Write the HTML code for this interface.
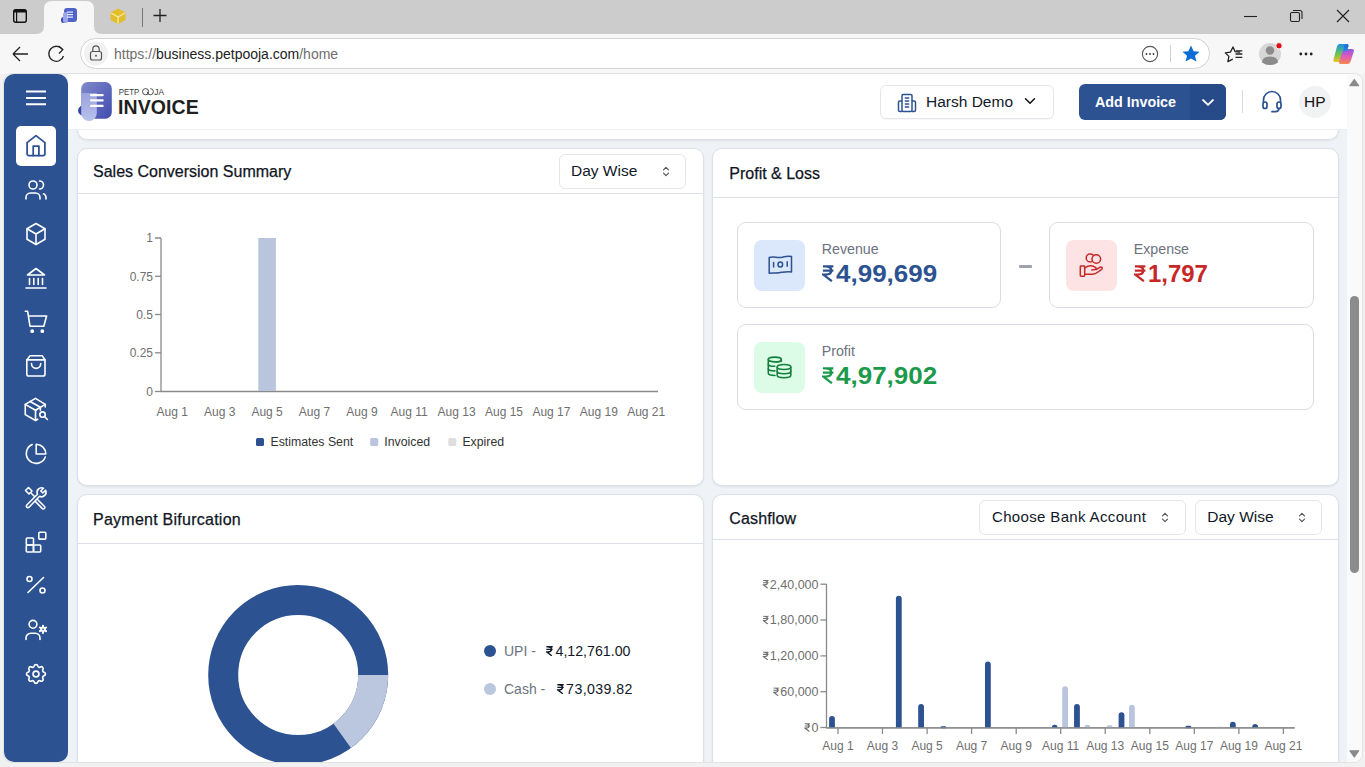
<!DOCTYPE html>
<html><head><meta charset="utf-8">
<style>
*{box-sizing:border-box;margin:0;padding:0}
html,body{width:1365px;height:767px;overflow:hidden;background:#f1f1f1;font-family:"Liberation Sans",sans-serif;color:#111827}
.abs{position:absolute}
#tabs{position:absolute;z-index:1;left:0;top:0;width:1365px;height:33.5px;background:#cccccc}
#addr{position:absolute;left:0;top:33px;width:1365px;height:41px;background:#f7f7f7}
#vp{position:absolute;left:4px;top:74px;width:1358px;height:688px;background:#eff2f6;overflow:hidden;border-radius:8px;box-shadow:0 0 0 1px #e2e2e2}
#side{position:absolute;z-index:6;left:0;top:0;width:64px;height:688px;background:#2c5291;border-radius:10px 10px 10px 10px}
#hdr{position:absolute;z-index:5;left:64px;top:0;width:1280px;height:56px;background:#fff;border-bottom:1px solid #edf0f3}
.card{position:absolute;background:#fff;border:1px solid #dde1e7;border-radius:10px;box-shadow:0 1px 2px rgba(0,0,0,.08)}
.ch{position:absolute;left:0;right:0;top:0;border-bottom:1px solid #dde1e7}
.title{position:absolute;left:16px;font-size:16px;color:#0f1522;white-space:nowrap;-webkit-text-stroke:0.25px #0f1522}
.sel{position:absolute;border:1px solid #e3e6ea;border-radius:6px;background:#fff;font-size:15px;color:#111827;white-space:nowrap}
.sel span{position:absolute;left:12px;top:9px}
.sel svg{position:absolute;top:12px}
.lbl{position:absolute;font-size:12px;color:#6b7280;white-space:nowrap}
.ico{position:absolute;left:22px;width:20px;height:20px}
#scroll{position:absolute;z-index:7;left:1343px;top:0;width:15px;height:688px;background:#fafafa}
.pbox{position:absolute;border:1px solid #d9dde3;border-radius:9px;background:#fff}
.tile{position:absolute;left:15.5px;top:16.5px;width:51.5px;height:51px;border-radius:8px}
.plbl{position:absolute;left:83.5px;top:18px;font-size:14.2px;color:#6b7280;white-space:nowrap}
.pamt{position:absolute;left:98px;top:38px;font-size:23px;font-weight:700;white-space:nowrap;transform-origin:0 0}
svg text{font-family:"Liberation Sans",sans-serif}
.leg{position:absolute;font-size:14px;color:#6b7280;white-space:nowrap}
.legv{position:absolute;font-size:14.2px;color:#111827;white-space:nowrap}
</style></head><body>
<svg width="0" height="0" style="position:absolute"><defs><symbol id="rs" viewBox="0 0 12 17"><path d="M0.8 1.3 H11.3 M0.8 5.6 H11.3 M3.2 1.3 Q9.2 1.3 9.2 5.6 Q9.2 9.7 3.5 9.7 H1.2 L9.8 16.2" fill="none" stroke="currentColor" stroke-width="2.2" stroke-linejoin="miter"/></symbol></defs></svg>

<div id="tabs">
  <svg class="abs" style="left:0;top:0" width="1365" height="34">
    <path d="M36 34 Q44 34 44 26 L44 9 Q44 1 52 1 L86 1 Q94 1 94 9 L94 26 Q94 34 102 34 Z" fill="#f7f7f7"/>
    <rect x="13.7" y="9.7" width="12.6" height="12.6" rx="2" fill="none" stroke="#111" stroke-width="1.4"/>
    <path d="M13.7 11.7 Q13.7 9.7 15.7 9.7 H24.3 Q26.3 9.7 26.3 11.7 V12.6 H13.7Z" fill="#111"/>
    <path d="M16.6 12 V22" stroke="#111" stroke-width="1.2"/>
    <rect x="64" y="8" width="13" height="14" rx="3" fill="#5063c9"/>
    <rect x="61" y="17" width="5" height="6" rx="2.5" fill="#3d4fb0"/>
    <rect x="63" y="12" width="5" height="11" rx="2.5" fill="#9aa7e8"/>
    <rect x="67" y="11.5" width="6" height="1.2" fill="#e8ecff"/><rect x="67" y="14" width="6" height="1.2" fill="#e8ecff"/><rect x="67" y="16.5" width="6" height="1.2" fill="#e8ecff"/>
    <path d="M118 8.5 L125.5 12.5 L125.5 20 L118 24 L110.5 20 L110.5 12.5 Z" fill="#e3bd2c"/>
    <path d="M111 13 L118 17 L125 13 M118 17 L118 23.5" stroke="#f6e7a0" stroke-width="1.4" fill="none"/>
    <rect x="142" y="8" width="1" height="19" fill="#777"/>
    <path d="M160 9 V22 M153.5 15.5 H166.5" stroke="#222" stroke-width="1.3"/>
    <path d="M1244 16.5 H1257" stroke="#222" stroke-width="1.1"/>
    <rect x="1290.5" y="12.5" width="9" height="9" rx="1.5" fill="none" stroke="#222" stroke-width="1.1"/>
    <path d="M1293 10.5 H1300 Q1302 10.5 1302 12.5 V19" fill="none" stroke="#222" stroke-width="1.1"/>
    <path d="M1337 10 L1349 22 M1349 10 L1337 22" stroke="#222" stroke-width="1.2"/>
  </svg>
</div>
<div id="addr">
  <svg class="abs" style="left:0;top:0" width="1365" height="41">
    <path d="M13 21 H28 M13 21 L20 14 M13 21 L20 28" stroke="#222" stroke-width="1.3" fill="none"/>
    <path d="M62.5 16.5 A7.5 7.5 0 1 0 63.5 23" stroke="#222" stroke-width="1.3" fill="none"/>
    <path d="M58.5 13 L62.8 16.6 L59 20.5" stroke="#222" stroke-width="1.3" fill="none"/>
    <rect x="80.5" y="5.5" width="1129" height="30" rx="15" fill="#fff" stroke="#d3d3d3"/>
    <circle cx="96" cy="20.5" r="12" fill="#f1f1f1"/>
    <rect x="90.5" y="18.5" width="11" height="8.5" rx="2" fill="none" stroke="#555" stroke-width="1.2"/>
    <path d="M92.8 18.5 V16 A3.2 3.2 0 0 1 99.2 16 V18.5" fill="none" stroke="#555" stroke-width="1.2"/>
    <circle cx="96" cy="22.7" r="1" fill="#555"/>
    <circle cx="1150" cy="21" r="7.6" fill="none" stroke="#555" stroke-width="1.1"/>
    <circle cx="1146.5" cy="21" r="0.9" fill="#333"/><circle cx="1150" cy="21" r="0.9" fill="#333"/><circle cx="1153.5" cy="21" r="0.9" fill="#333"/>
    <rect x="1170" y="12" width="1" height="17" fill="#d0d0d0"/>
    <path d="M1191 12.5 L1193.6 18.3 L1199.5 18.8 L1195 22.8 L1196.4 28.6 L1191 25.6 L1185.6 28.6 L1187 22.8 L1182.5 18.8 L1188.4 18.3 Z" fill="#0b6dd4"/>
    <path d="M1233 14 L1235 18.6 L1239.6 19 M1232.3 26.3 L1227.9 28.6 L1228.9 23.4 L1225.3 19.9 L1230.4 19.1 L1233 14" fill="none" stroke="#222" stroke-width="1.3" stroke-linejoin="round" stroke-linecap="round"/>
    <path d="M1236 17.8 H1242.3 M1235.5 21 H1242.3 M1235.5 24.4 H1242.3" stroke="#222" stroke-width="1.3"/>
    <circle cx="1270" cy="21" r="11" fill="#d6d6d6"/>
    <circle cx="1270" cy="17.5" r="4.2" fill="#8b8b8b"/>
    <path d="M1262 29.5 Q1262 23.5 1270 23.5 Q1278 23.5 1278 29.5 Q1274.5 32 1270 32 Q1265.5 32 1262 29.5Z" fill="#8b8b8b"/>
    <circle cx="1279" cy="12.8" r="3.2" fill="#e0101a" stroke="#f7f7f7" stroke-width="1"/>
    <circle cx="1300.8" cy="21" r="1.4" fill="#222"/><circle cx="1306" cy="21" r="1.4" fill="#222"/><circle cx="1311.2" cy="21" r="1.4" fill="#222"/>
    <defs><linearGradient id="cp1" x1="0" y1="0" x2="0" y2="1"><stop offset="0" stop-color="#1a8fe8"/><stop offset=".5" stop-color="#5cc160"/><stop offset="1" stop-color="#f3c21c"/></linearGradient>
    <linearGradient id="cp2" x1="0" y1="0" x2="0" y2="1"><stop offset="0" stop-color="#8a5ae8"/><stop offset=".5" stop-color="#e05ab8"/><stop offset="1" stop-color="#f4894a"/></linearGradient>
    <linearGradient id="cp3" x1="0" y1="0" x2="0" y2="1"><stop offset="0" stop-color="#2a5fe0"/><stop offset="1" stop-color="#1a8fe8"/></linearGradient></defs>
    <path d="M1339.5 11 H1346.5 Q1349 11 1348.3 13.5 L1344.3 26.5 Q1343.5 29 1341 29 H1335.3 Q1332.8 29 1333.5 26.5 L1337 13.5 Q1337.7 11 1339.5 11Z" fill="url(#cp1)"/>
    <path d="M1345.2 16 H1351.8 Q1354.5 16 1353.8 18.5 L1350.6 28.5 Q1349.8 31 1347.3 31 H1340.8 Q1338.5 31 1339.2 28.5 L1342.5 18.5 Q1343.2 16 1345.2 16Z" fill="url(#cp2)"/>
    <path d="M1346.5 11 Q1349 11 1348.3 13.5 L1346.8 18 H1343 L1344 13.5 Q1344.6 11 1346.5 11Z" fill="url(#cp3)"/>
  </svg>
  <div class="abs" style="left:114px;top:13px;font-size:14px;white-space:nowrap;color:#222"><span style="color:#6e6e6e">https://</span>business.petpooja.com<span style="color:#6e6e6e">/home</span></div>
</div>

<div id="vp">
  <div id="side"><svg class="abs" style="left:0;top:0" width="64" height="688"><path d="M22 17.5 H42 M22 24 H42 M22 30.3 H42" stroke="#fff" stroke-width="2"/><rect x="12" y="52" width="40" height="40" rx="5" fill="#fff"/><g transform="translate(20.00,60.00) scale(1.0)" fill="none" stroke="#2c5291" stroke-width="1.75" stroke-linecap="round" stroke-linejoin="round"><path d="M3.1 8.6 L12 1.6 L20.9 8.6 V19.8 a1.8 1.8 0 0 1 -1.8 1.8 H4.9 a1.8 1.8 0 0 1 -1.8 -1.8 Z"/><path d="M9.2 21.6 V12.1 H14.9 V21.6"/></g><g transform="translate(20.00,104.00) scale(1.0)" fill="none" stroke="#fff" stroke-width="1.6" stroke-linecap="round" stroke-linejoin="round"><circle cx="9" cy="7" r="4"/><path d="M2 21 v-1.5 a4.5 4.5 0 0 1 4.5 -4.5 h5 a4.5 4.5 0 0 1 4.5 4.5 v1.5"/><path d="M15.5 3 a4 4 0 0 1 0 8"/><path d="M22 21 v-1.5 a4 4 0 0 0 -2.5 -3.7"/></g><g transform="translate(20.00,148.00) scale(1.0)" fill="none" stroke="#fff" stroke-width="1.6" stroke-linecap="round" stroke-linejoin="round"><path d="M12 1.5 L21 6.8 V17.2 L12 22.5 L3 17.2 V6.8 Z"/><path d="M12 12 L21 6.8 M12 12 V22.5 M12 12 L3 6.8"/></g><g transform="translate(20.00,192.00) scale(1.0)" fill="none" stroke="#fff" stroke-width="1.6" stroke-linecap="round" stroke-linejoin="round"><path d="M2 22 H22"/><path d="M3.5 9 H20.5 L12 2.5 Z"/><path d="M5.5 12.5 V18.5 M9.8 12.5 V18.5 M14.2 12.5 V18.5 M18.5 12.5 V18.5"/></g><g transform="translate(20.00,236.00) scale(1.0)" fill="none" stroke="#fff" stroke-width="1.6" stroke-linecap="round" stroke-linejoin="round"><path d="M1.3 1.2 H3.6 L6 16.2 H19.8 L22.6 6 H4.4"/><circle cx="8.2" cy="21.2" r="1.1" fill="#fff"/><circle cx="18.3" cy="21.2" r="1.1" fill="#fff"/></g><g transform="translate(20.00,280.00) scale(1.0)" fill="none" stroke="#fff" stroke-width="1.6" stroke-linecap="round" stroke-linejoin="round"><path d="M6 1.7 H18.2 L21 5.9 V19.9 a2.1 2.1 0 0 1 -2.1 2.1 H4.9 a2.1 2.1 0 0 1 -2.1 -2.1 V5.9 Z"/><path d="M2.8 5.9 H21"/><path d="M7.5 9.6 a4.6 4.8 0 0 0 9.2 0"/></g><g transform="translate(19.64,322.24) scale(1.08)" fill="none" stroke="#fff" stroke-width="1.5" stroke-linecap="round" stroke-linejoin="round"><path d="M20 10 V7.5 L11 2 L1.5 7.5 V17 L11 22.5 L13 21.3"/><path d="M6 4.8 L15.5 10.2 V13"/><path d="M1.5 7.5 L11 13 L20 7.5"/><path d="M11 13 V22.5"/><circle cx="17.5" cy="17" r="2.5"/><path d="M19.3 18.8 L22 21.5"/></g><g transform="translate(20.00,368.00) scale(1.0)" fill="none" stroke="#fff" stroke-width="1.6" stroke-linecap="round" stroke-linejoin="round"><path d="M8.2 2.6 A9.8 9.8 0 1 0 21.3 15"/><path d="M12.2 2.3 V12 H21.8 A9.6 9.6 0 0 0 12.2 2.3 Z"/></g><g transform="translate(20.00,412.00) scale(1.0)" fill="none" stroke="#fff" stroke-width="1.6" stroke-linecap="round" stroke-linejoin="round"><path d="M2.8 19 L13.5 8.3 a4.5 4.5 0 0 1 6 -6 L16.8 5 L18.8 7 L21.6 4.3 a4.5 4.5 0 0 1 -6 6 L5 21.2 a1.5 1.5 0 0 1 -2.2 -2.2Z"/><path d="M4.5 1.5 L1.5 4.5 L5 8 L8 5 Z"/><path d="M6.5 6.5 L10.5 10.5"/><path d="M13.5 13.5 L20.5 20.5 a1.5 1.5 0 0 1 -2.1 2.1 L11.5 15.6"/></g><g transform="translate(20.00,456.00) scale(1.0)" fill="none" stroke="#fff" stroke-width="1.6" stroke-linecap="round" stroke-linejoin="round"><rect x="2.3" y="8" width="7.2" height="7" rx=".9"/><rect x="2.3" y="15" width="7.2" height="7" rx=".9"/><rect x="9.5" y="15" width="7.2" height="7" rx=".9"/><rect x="14.8" y="2.3" width="7" height="6.8" rx=".9"/></g><g transform="translate(20.00,500.00) scale(1.0)" fill="none" stroke="#fff" stroke-width="1.6" stroke-linecap="round" stroke-linejoin="round"><circle cx="5.5" cy="5" r="2.5"/><circle cx="18.5" cy="16.5" r="2.5"/><path d="M4 18.5 L19.5 3.5"/></g><g transform="translate(20.00,544.00) scale(1.0)" fill="none" stroke="#fff" stroke-width="1.6" stroke-linecap="round" stroke-linejoin="round"><circle cx="9" cy="6.3" r="3.9"/><path d="M2 21.5 V20 a4.8 4.8 0 0 1 4.8 -4.8 H11.2 a4.8 4.8 0 0 1 4.8 4.8 V21.5"/><circle cx="19.0" cy="11.3" r="2.7" fill="#fff" stroke="none"/><path d="M20.91 12.40 L22.12 13.10 M19.00 13.50 L19.00 14.90 M17.09 12.40 L15.88 13.10 M17.09 10.20 L15.88 9.50 M19.00 9.10 L19.00 7.70 M20.91 10.20 L22.12 9.50" stroke-width="2" stroke-linecap="round"/><circle cx="19.0" cy="11.3" r="0.9" fill="#2c5291" stroke="none"/></g><g transform="translate(19.40,587.40) scale(1.05)" fill="none" stroke="#fff" stroke-width="1.6" stroke-linecap="round" stroke-linejoin="round"><path d="M10.3 4.3c.43-1.76 2.92-1.76 3.35 0a1.72 1.72 0 0 0 2.57 1.07c1.54-.94 3.31.83 2.37 2.37a1.72 1.72 0 0 0 1.07 2.57c1.76.43 1.76 2.92 0 3.35a1.72 1.72 0 0 0-1.07 2.57c.94 1.54-.83 3.31-2.37 2.37a1.72 1.72 0 0 0-2.57 1.07c-.43 1.76-2.92 1.76-3.35 0a1.72 1.72 0 0 0-2.57-1.07c-1.54.94-3.31-.83-2.37-2.37a1.72 1.72 0 0 0-1.07-2.57c-1.76-.43-1.76-2.92 0-3.35a1.72 1.72 0 0 0 1.07-2.57c-.94-1.54.83-3.31 2.37-2.37c1 .61 2.3.07 2.57-1.07z"/><circle cx="12" cy="12" r="2.8"/></g></svg></div>
  <div id="hdr">
  <svg class="abs" style="left:-64px;top:0" width="1343" height="56">
    <defs>
      <linearGradient id="lg1" x1="0" y1="0" x2="1" y2="1"><stop offset="0" stop-color="#8189cc"/><stop offset="1" stop-color="#3f4cae"/></linearGradient>
      <linearGradient id="lg2" x1="0" y1="0" x2="0" y2="1"><stop offset="0" stop-color="#9aa3dc"/><stop offset="1" stop-color="#b9c1ec"/></linearGradient>
    </defs>
    <rect x="77.2" y="8" width="30.6" height="36.7" rx="6.5" fill="url(#lg1)"/>
    <ellipse cx="82" cy="36.5" rx="8" ry="6" fill="#3a47a8"/>
    <path d="M77.2 19 H92.8 V39.3 a7.8 7.8 0 0 1 -15.6 0 Z" fill="url(#lg2)"/>
    <rect x="86" y="20.1" width="13.7" height="2.2" rx="1" fill="#fff"/>
    <rect x="86" y="25.3" width="13.7" height="2.2" rx="1" fill="#fff"/>
    <rect x="86" y="30.7" width="13.7" height="2.2" rx="1" fill="#fff"/>
    <text x="114.8" y="20.8" font-size="8.8" fill="#3a3a3a" textLength="20.5" lengthAdjust="spacingAndGlyphs">PETP</text>
    <circle cx="141.6" cy="17.7" r="3.1" fill="none" stroke="#3a3a3a" stroke-width="0.9"/>
    <path d="M146.3 14.6 A3.1 3.1 0 1 1 143.2 17.7" fill="none" stroke="#3a3a3a" stroke-width="0.9"/>
    <text x="150.2" y="20.8" font-size="8.8" fill="#3a3a3a" textLength="9.8" lengthAdjust="spacingAndGlyphs">JA</text>
  </svg>
  <div class="abs" style="left:50px;top:21.5px;font-size:19.5px;font-weight:700;color:#1f1f1f;white-space:nowrap;letter-spacing:0.1px">INVOICE</div>

  <div class="abs" style="left:812px;top:10.5px;width:174px;height:34.5px;border:1px solid #e3e6ea;border-radius:6px;background:#fff;box-shadow:0 1px 1px rgba(0,0,0,.03)">
    <svg class="abs" style="left:16px;top:7.5px" width="20" height="20" viewBox="0 0 20 20" fill="none" stroke="#2c5291" stroke-width="1.5" stroke-linejoin="round">
      <rect x="5" y="1.5" width="10" height="17" rx="1.2"/>
      <path d="M5 8 H3 a1.5 1.5 0 0 0 -1.5 1.5 V17 a1.5 1.5 0 0 0 1.5 1.5 H5"/>
      <path d="M15 8 H17 a1.5 1.5 0 0 1 1.5 1.5 V17 a1.5 1.5 0 0 1 -1.5 1.5 H15"/>
      <path d="M7.8 5 H12.2 M7.8 8 H12.2 M7.8 11 H12.2 M7.8 14 H12.2"/>
    </svg>
    <div class="abs" style="left:45px;top:7px;font-size:15.5px;color:#111827;white-space:nowrap">Harsh Demo</div>
    <svg class="abs" style="left:143px;top:11px" width="12" height="8" viewBox="0 0 12 8" fill="none" stroke="#111" stroke-width="1.5" stroke-linecap="round" stroke-linejoin="round"><path d="M1.5 1.8 L6 6.2 L10.5 1.8"/></svg>
  </div>

  <div class="abs" style="left:1011px;top:10px;width:147px;height:36px;border-radius:6px;background:#2c5291;overflow:hidden">
    <div class="abs" style="left:111px;top:0;width:36px;height:36px;background:#264b88"></div>
    <div class="abs" style="left:16px;top:9.5px;font-size:14.3px;font-weight:700;color:#fff;white-space:nowrap">Add Invoice</div>
    <svg class="abs" style="left:122px;top:14px" width="14" height="9" viewBox="0 0 14 9" fill="none" stroke="#fff" stroke-width="1.8" stroke-linecap="round" stroke-linejoin="round"><path d="M2 2 L7 6.8 L12 2"/></svg>
  </div>
  <div class="abs" style="left:1174px;top:16px;width:1px;height:23px;background:#d9dce1"></div>
  <svg class="abs" style="left:1193px;top:16px" width="22" height="23" viewBox="0 0 22 23" fill="none" stroke="#2c5291" stroke-width="1.7" stroke-linecap="round" stroke-linejoin="round">
    <path d="M2.5 12.5 V10 a8.5 8.5 0 0 1 17 0 V12.5"/>
    <rect x="2" y="12" width="4" height="6.5" rx="2"/>
    <rect x="16" y="12" width="4" height="6.5" rx="2"/>
    <path d="M18 18.5 a3.5 3.5 0 0 1 -3.5 3.2 H11"/>
  </svg>
  <div class="abs" style="left:1231px;top:12px;width:32px;height:32px;border-radius:50%;background:#f1f2f4"></div>
  <div class="abs" style="left:1236px;top:18.5px;font-size:15.5px;color:#111;white-space:nowrap">HP</div>
</div><!--/hdr-->
  <!-- previous card bottom -->
  <div class="card" style="left:72.5px;top:-40px;width:1262px;height:105.5px"></div>
  <!-- Sales conversion -->
  <div class="card" id="c1" style="left:72.5px;top:74px;width:627px;height:338px">
  <div class="ch" style="height:45px"></div>
  <div class="title" style="left:15.5px;top:14px">Sales Conversion Summary</div>
  <div class="sel" style="left:481.5px;top:4.5px;width:127px;height:35px"><span style="left:11px;top:7.5px;font-size:15.5px">Day Wise</span><svg class="abs" style="left:102px;top:11px" width="8" height="11" viewBox="0 0 8 11" fill="none" stroke="#555" stroke-width="1.2" stroke-linecap="round" stroke-linejoin="round"><path d="M1.5 3.8 L4 1.3 L6.5 3.8 M1.5 7.2 L4 9.7 L6.5 7.2"/></svg></div>
  <svg class="abs chart" style="left:0;top:0" width="625" height="336" fill="#6f6f6f" font-size="12"><path d="M83 89 V242.5 H580" fill="none" stroke="#8a8a8a" stroke-width="1.3"/><path d="M77 89.0 H83" stroke="#8a8a8a" stroke-width="1.3"/><text x="75" y="93.3" text-anchor="end">1</text><path d="M77 127.3 H83" stroke="#8a8a8a" stroke-width="1.3"/><text x="75" y="131.6" text-anchor="end">0.75</text><path d="M77 165.5 H83" stroke="#8a8a8a" stroke-width="1.3"/><text x="75" y="169.8" text-anchor="end">0.5</text><path d="M77 203.8 H83" stroke="#8a8a8a" stroke-width="1.3"/><text x="75" y="208.1" text-anchor="end">0.25</text><path d="M77 242.5 H83" stroke="#8a8a8a" stroke-width="1.3"/><text x="75" y="246.8" text-anchor="end">0</text><text x="94.3" y="266.8" text-anchor="middle">Aug 1</text><text x="141.7" y="266.8" text-anchor="middle">Aug 3</text><text x="189.1" y="266.8" text-anchor="middle">Aug 5</text><text x="236.5" y="266.8" text-anchor="middle">Aug 7</text><text x="283.9" y="266.8" text-anchor="middle">Aug 9</text><text x="331.2" y="266.8" text-anchor="middle">Aug 11</text><text x="378.6" y="266.8" text-anchor="middle">Aug 13</text><text x="426.0" y="266.8" text-anchor="middle">Aug 15</text><text x="473.4" y="266.8" text-anchor="middle">Aug 17</text><text x="520.8" y="266.8" text-anchor="middle">Aug 19</text><text x="568.2" y="266.8" text-anchor="middle">Aug 21</text><rect x="180.3" y="89.0" width="17.6" height="153" fill="#b8c5dd"/><rect x="178" y="289" width="8" height="8" rx="1.5" fill="#2c5291"/><rect x="292.2" y="289" width="8" height="8" rx="1.5" fill="#b8c5dd"/><rect x="370.3" y="289" width="8" height="8" rx="1.5" fill="#dedede"/><g fill="#333" font-size="12.3"><text x="192.5" y="296.8">Estimates Sent</text><text x="306.3" y="296.8">Invoiced</text><text x="384.4" y="296.8">Expired</text></g></svg>
</div><!--/c1-->
  <!-- Profit & loss -->
  <div class="card" id="c2" style="left:708.3px;top:74px;width:627px;height:338px">
  <div class="ch" style="height:49px"></div>
  <div class="title" style="left:16px;top:15.5px">Profit &amp; Loss</div>
  <div class="pbox" style="left:24px;top:73px;width:264px;height:86px">
    <div class="tile" style="background:#dbe7fb"><svg class="abs" style="left:13.8px;top:15.8px" width="25" height="20" viewBox="0 0 25 20" fill="none" stroke="#2c5291" stroke-width="1.5" stroke-linejoin="round" stroke-linecap="round"><path d="M1.2 2.5 C6 0.8 9 3.2 14 2.2 C18 1.2 21 0.8 23.5 1.5 V17 C19 16 15 17.3 11 17.8 C7 18.3 4 17.5 1.2 18.3 Z"/><path d="M5.6 7.5 V12 M19.2 6.8 V11.2"/><ellipse cx="12.3" cy="9.6" rx="2.3" ry="2.5"/></svg></div>
    <div class="plbl">Revenue</div>
    <svg class="abs" style="left:83.5px;top:42.3px;width:12.2px;height:17px;color:#2c5291" viewBox="0 0 12 17"><use href="#rs"/></svg>
    <div class="pamt" style="color:#2c5291;transform:scaleX(1.13)">4,99,699</div>
  </div>
  <div class="abs" style="left:306px;top:116px;width:13px;height:3px;background:#9ca3af;border-radius:1px"></div>
  <div class="pbox" style="left:336px;top:73px;width:265px;height:86px">
    <div class="tile" style="background:#fde3e3"><svg class="abs" style="left:13.5px;top:13px" width="25" height="25" viewBox="0 0 25 25" fill="none" stroke="#c62828" stroke-width="1.5" stroke-linejoin="round" stroke-linecap="round"><rect x="1.3" y="12.9" width="4.4" height="10.3" rx=".7"/><path d="M5.7 15 C8.5 13 11.5 12.3 14.5 13.3 L16.8 14.6 Q17.6 16 16.2 16.6 L12.8 17"/><path d="M5.7 21.3 H13.5 Q16.3 21.3 19 19 L22.7 16.3 Q23.8 15 22.7 14.2 Q21.6 13.6 20.2 14.6 L17.2 16.5"/><circle cx="11.2" cy="4.9" r="4"/><circle cx="17.3" cy="6" r="4.3" fill="#fde3e3"/></svg></div>
    <div class="plbl">Expense</div>
    <svg class="abs" style="left:83.5px;top:42.3px;width:12.2px;height:17px;color:#c62828" viewBox="0 0 12 17"><use href="#rs"/></svg>
    <div class="pamt" style="color:#c62828;transform:scaleX(1.04)">1,797</div>
  </div>
  <div class="pbox" style="left:24px;top:175px;width:577px;height:86px">
    <div class="tile" style="background:#dcfce7"><svg class="abs" style="left:13px;top:14px" width="26" height="24" viewBox="0 0 26 24" fill="none" stroke="#15803d" stroke-width="1.6" stroke-linejoin="round" stroke-linecap="round"><ellipse cx="7.8" cy="3.4" rx="6.5" ry="2.3"/><path d="M14.3 3.4 V5.2 Q11 6.2 7.8 5.7 Q1.3 5.4 1.3 3.4 V17.2 Q1.3 19.3 8 19.5"/><path d="M1.3 8.2 Q1.3 10.3 7.8 10.3 M1.3 12.8 Q1.3 14.9 7.8 14.9"/><path d="M10.2 11 V19.3 Q10.2 21.8 17 21.8 Q23.8 21.8 23.8 19.3 V11"/><ellipse cx="17" cy="11" rx="6.8" ry="2.5"/><path d="M10.2 15.2 Q10.2 17.7 17 17.7 Q23.8 17.7 23.8 15.2"/></svg></div>
    <div class="plbl">Profit</div>
    <svg class="abs" style="left:83.5px;top:42.3px;width:12.2px;height:17px;color:#1c9a4b" viewBox="0 0 12 17"><use href="#rs"/></svg>
    <div class="pamt" style="color:#1c9a4b;transform:scaleX(1.13)">4,97,902</div>
  </div>
</div><!--/c2-->
  <!-- Payment bifurcation -->
  <div class="card" id="c3" style="left:72.5px;top:420px;width:627px;height:330px">
  <div class="ch" style="height:49px"></div>
  <div class="title" style="left:15.5px;top:16px;letter-spacing:.25px">Payment Bifurcation</div>
  <svg class="abs" style="left:0;top:0" width="625" height="330">
    <circle cx="220.20" cy="180.00" r="75" fill="none" stroke="#2c5291" stroke-width="30"/>
    <path d="M310.20 180.00 A90 90 0 0 1 272.97 252.90 L255.38 228.60 A60 60 0 0 0 280.20 180.00 Z" fill="#bac7de"/>
    <circle cx="412" cy="156" r="6" fill="#2c5291"/>
    <circle cx="412" cy="194" r="6" fill="#bac7de"/>
  </svg>
  <div class="leg" style="left:426.5px;top:147.70000000000005px">UPI -</div>
  <svg class="abs" style="left:467.79999999999995px;top:150.5px;width:9px;height:10.3px;color:#111827" viewBox="0 0 12 17"><use href="#rs"/></svg>
  <div class="legv" style="left:478px;top:147.70000000000005px">4,12,761.00</div>
  <div class="leg" style="left:426.5px;top:186px">Cash -</div>
  <svg class="abs" style="left:478.4px;top:188.79999999999995px;width:9px;height:10.3px;color:#111827" viewBox="0 0 12 17"><use href="#rs"/></svg>
  <div class="legv" style="letter-spacing:.4px;left:488.6px;top:186px">73,039.82</div>
</div><!--/c3-->
  <!-- Cashflow -->
  <div class="card" id="c4" style="left:708.3px;top:420px;width:627px;height:330px">
  <div class="ch" style="height:45px"></div>
  <div class="title" style="left:16px;top:14.5px;letter-spacing:.15px">Cashflow</div>
  <div class="sel" style="left:265.70000000000005px;top:4.5px;width:207px;height:35px"><span style="left:12px;top:7px;letter-spacing:.35px">Choose Bank Account</span><svg class="abs" style="left:181.5px;top:11px" width="8" height="11" viewBox="0 0 8 11" fill="none" stroke="#555" stroke-width="1.2" stroke-linecap="round" stroke-linejoin="round"><path d="M1.5 3.8 L4 1.3 L6.5 3.8 M1.5 7.2 L4 9.7 L6.5 7.2"/></svg></div>
  <div class="sel" style="left:481.5px;top:4.5px;width:127px;height:35px"><span style="left:11.5px;top:7px;font-size:15.5px">Day Wise</span><svg class="abs" style="left:102px;top:11px" width="8" height="11" viewBox="0 0 8 11" fill="none" stroke="#555" stroke-width="1.2" stroke-linecap="round" stroke-linejoin="round"><path d="M1.5 3.8 L4 1.3 L6.5 3.8 M1.5 7.2 L4 9.7 L6.5 7.2"/></svg></div>
  <svg class="abs" style="left:0;top:0" width="625" height="330" fill="#6f6f6f" font-size="12"><path d="M113.5 89 V232.79999999999995 H581.5999999999999" fill="none" stroke="#8a8a8a" stroke-width="1.3"/><path d="M107.5 89.2 H113.5" stroke="#8a8a8a" stroke-width="1.3"/><text x="105.5" y="93.6" text-anchor="end" font-size="12.5">2,40,000</text><use href="#rs" x="49.6" y="84.8" width="6.4" height="8.8" style="color:#6f6f6f"/><path d="M107.5 125.0 H113.5" stroke="#8a8a8a" stroke-width="1.3"/><text x="105.5" y="129.4" text-anchor="end" font-size="12.5">1,80,000</text><use href="#rs" x="49.6" y="120.6" width="6.4" height="8.8" style="color:#6f6f6f"/><path d="M107.5 160.9 H113.5" stroke="#8a8a8a" stroke-width="1.3"/><text x="105.5" y="165.3" text-anchor="end" font-size="12.5">1,20,000</text><use href="#rs" x="49.6" y="156.5" width="6.4" height="8.8" style="color:#6f6f6f"/><path d="M107.5 196.7 H113.5" stroke="#8a8a8a" stroke-width="1.3"/><text x="105.5" y="201.1" text-anchor="end" font-size="12.5">60,000</text><use href="#rs" x="60.0" y="192.3" width="6.4" height="8.8" style="color:#6f6f6f"/><path d="M107.5 232.5 H113.5" stroke="#8a8a8a" stroke-width="1.3"/><text x="105.5" y="236.9" text-anchor="end" font-size="12.5">0</text><use href="#rs" x="91.2" y="228.1" width="6.4" height="8.8" style="color:#6f6f6f"/><path d="M125.0 232.79999999999995 V239" stroke="#8a8a8a" stroke-width="1.3"/><text x="125.0" y="255.0" text-anchor="middle">Aug 1</text><path d="M169.5 232.79999999999995 V239" stroke="#8a8a8a" stroke-width="1.3"/><text x="169.5" y="255.0" text-anchor="middle">Aug 3</text><path d="M214.1 232.79999999999995 V239" stroke="#8a8a8a" stroke-width="1.3"/><text x="214.1" y="255.0" text-anchor="middle">Aug 5</text><path d="M258.6 232.79999999999995 V239" stroke="#8a8a8a" stroke-width="1.3"/><text x="258.6" y="255.0" text-anchor="middle">Aug 7</text><path d="M303.2 232.79999999999995 V239" stroke="#8a8a8a" stroke-width="1.3"/><text x="303.2" y="255.0" text-anchor="middle">Aug 9</text><path d="M347.7 232.79999999999995 V239" stroke="#8a8a8a" stroke-width="1.3"/><text x="347.7" y="255.0" text-anchor="middle">Aug 11</text><path d="M392.2 232.79999999999995 V239" stroke="#8a8a8a" stroke-width="1.3"/><text x="392.2" y="255.0" text-anchor="middle">Aug 13</text><path d="M436.8 232.79999999999995 V239" stroke="#8a8a8a" stroke-width="1.3"/><text x="436.8" y="255.0" text-anchor="middle">Aug 15</text><path d="M481.3 232.79999999999995 V239" stroke="#8a8a8a" stroke-width="1.3"/><text x="481.3" y="255.0" text-anchor="middle">Aug 17</text><path d="M525.9 232.79999999999995 V239" stroke="#8a8a8a" stroke-width="1.3"/><text x="525.9" y="255.0" text-anchor="middle">Aug 19</text><path d="M570.4 232.79999999999995 V239" stroke="#8a8a8a" stroke-width="1.3"/><text x="570.4" y="255.0" text-anchor="middle">Aug 21</text><path d="M116.10 232.80 V224.00 A2.9 2.9 0 0 1 121.90 224.00 V232.80 Z" fill="#2c5291"/><path d="M182.91 232.80 V103.70 A2.9 2.9 0 0 1 188.71 103.70 V232.80 Z" fill="#2c5291"/><path d="M205.18 232.80 V212.00 A2.9 2.9 0 0 1 210.98 212.00 V232.80 Z" fill="#2c5291"/><rect x="227.45" y="231.30" width="5.8" height="2.00" rx="1.5" fill="#2c5291"/><path d="M271.99 232.80 V169.40 A2.9 2.9 0 0 1 277.79 169.40 V232.80 Z" fill="#2c5291"/><path d="M338.80 232.80 V232.70 A2.9 2.9 0 0 1 344.60 232.70 V232.80 Z" fill="#2c5291"/><path d="M349.20 232.80 V194.20 A2.9 2.9 0 0 1 355.00 194.20 V232.80 Z" fill="#b8c5dd"/><path d="M361.07 232.80 V212.00 A2.9 2.9 0 0 1 366.87 212.00 V232.80 Z" fill="#2c5291"/><path d="M371.47 232.80 V232.70 A2.9 2.9 0 0 1 377.27 232.70 V232.80 Z" fill="#b8c5dd"/><rect x="393.74" y="230.30" width="5.8" height="3.00" rx="1.5" fill="#b8c5dd"/><path d="M405.61 232.80 V220.20 A2.9 2.9 0 0 1 411.41 220.20 V232.80 Z" fill="#2c5291"/><path d="M416.01 232.80 V212.70 A2.9 2.9 0 0 1 421.81 212.70 V232.80 Z" fill="#b8c5dd"/><rect x="472.42" y="230.80" width="5.8" height="2.50" rx="1.5" fill="#2c5291"/><rect x="505.09" y="231.80" width="5.8" height="1.50" rx="1.5" fill="#b8c5dd"/><path d="M516.96 232.80 V229.70 A2.9 2.9 0 0 1 522.76 229.70 V232.80 Z" fill="#2c5291"/><path d="M539.23 232.80 V232.00 A2.9 2.9 0 0 1 545.03 232.00 V232.80 Z" fill="#2c5291"/><path d="M113.5 232.79999999999995 H581.5999999999999" fill="none" stroke="#8a8a8a" stroke-width="1.3"/></svg>
</div><!--/c4-->
  <div id="scroll">
    <svg class="abs" style="left:0;top:0" width="15" height="688">
      <path d="M7.3 5.5 L11.6 11.7 H3 Z" fill="#8a8a8a" stroke="#8a8a8a" stroke-width="1.2" stroke-linejoin="round"/>
      <rect x="3" y="222" width="9" height="277" rx="4.5" fill="#8c8c8c"/>
      <path d="M7.3 683 L11.6 676.8 H3 Z" fill="#8a8a8a" stroke="#8a8a8a" stroke-width="1.2" stroke-linejoin="round"/>
    </svg>
  </div>
</div>

</body></html>
